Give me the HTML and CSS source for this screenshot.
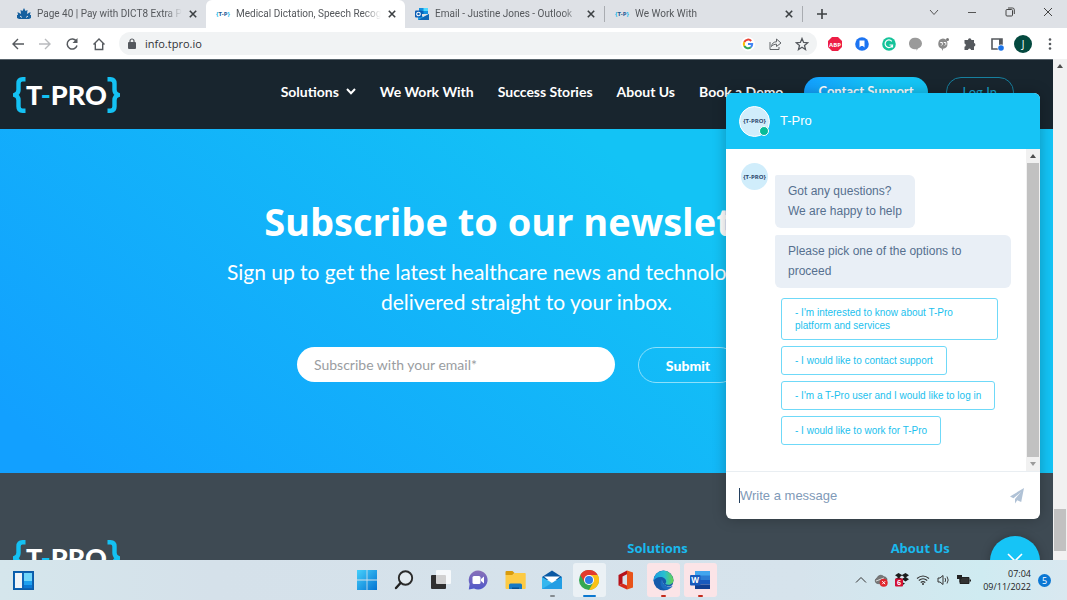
FILE: index.html
```html
<!DOCTYPE html>
<html lang="en">
<head>
<meta charset="utf-8">
<title>Medical Dictation, Speech Recognition</title>
<link rel="stylesheet" href="styles.css">
</head>
<body>
<svg class="defs" aria-hidden="true">
  <symbol id="x" viewBox="0 0 10 10"><path d="M1.800 1.800l6.400 6.400M8.200 1.800L1.800 8.200" stroke="#3c4043" stroke-width="1.600"/></symbol>
  <symbol id="brace" viewBox="0 0 13 36"><path d="M12.500 2.200H9.500Q5.500 2.200 5.500 6.500V13Q5.500 16.800 1.500 18Q5.500 19.200 5.500 23V29.500Q5.500 33.800 9.500 33.800H12.500" fill="none" stroke="#14c1f3" stroke-width="4.400"/></symbol>
</svg>

<header class="tabs">
  <div class="tab">
    <svg class="fav" viewBox="0 0 14 14"><path d="M7 1l1.500 3 2-1-.5 4 3.500-2-.5 3h1v3l-2 1H2l-2-1V8h1l-.5-3L4 7l-.5-4 2 1z" fill="#15609f"/><path d="M3 9l2 1.500M11 9l-2 1.500" stroke="#dee1e6"/></svg>
    <span class="tab-title">Page 40 | Pay with DICT8 Extra Plus</span>
    <button aria-label="Close tab"><svg width="10" height="10"><use href="#x"/></svg></button>
  </div>
  <div class="tab active">
    <span class="fav tp"><i>{</i>T-P<i>}</i></span>
    <span class="tab-title">Medical Dictation, Speech Recognition</span>
    <button aria-label="Close tab"><svg width="10" height="10"><use href="#x"/></svg></button>
  </div>
  <div class="tab">
    <svg class="fav" viewBox="0 0 14 14"><path d="M4 1h9v6H4z" fill="#1490df"/><path d="M8.500 1H13v3H8.500z" fill="#50d9ff"/><path d="M4 4h4.500v3H4z" fill="#0364b8"/><path d="M3 7l5.500 3L14 7v6H3z" fill="#28a8ea"/><path d="M3 13l11-6v6z" fill="#1066b5"/><rect y="3.500" width="7" height="7" rx="1" fill="#0a5db5"/><circle cx="3.500" cy="7" r="1.800" fill="none" stroke="#fff" stroke-width="1.100"/></svg>
    <span class="tab-title">Email - Justine Jones - Outlook</span>
    <button aria-label="Close tab"><svg width="10" height="10"><use href="#x"/></svg></button>
  </div>
  <div class="tab divided">
    <span class="fav tp"><i>{</i>T-P<i>}</i></span>
    <span class="tab-title">We Work With</span>
    <button aria-label="Close tab"><svg width="10" height="10"><use href="#x"/></svg></button>
  </div>
  <button class="new-tab" aria-label="New tab"><svg width="12" height="12" viewBox="0 0 12 12"><path d="M6 1v10M1 6h10" stroke="#3c4043" stroke-width="1.600"/></svg></button>
  <div class="window">
    <button aria-label="Search tabs"><svg width="10" height="10" viewBox="0 0 10 10"><path d="M1 3l4 4.500L9 3" fill="none" stroke="#555" stroke-width="1"/></svg></button>
    <button aria-label="Minimise"><svg width="10" height="10" viewBox="0 0 10 10"><path d="M1 5.500h8" stroke="#555"/></svg></button>
    <button aria-label="Restore"><svg width="10" height="10" viewBox="0 0 10 10"><rect x="1" y="2.500" width="6.500" height="6.500" rx="1" fill="none" stroke="#444"/><path d="M3 1h4.500q1.800 0 1.800 1.800V7" fill="none" stroke="#444"/></svg></button>
    <button aria-label="Close"><svg width="10" height="10" viewBox="0 0 10 10"><path d="M1 1l8 8M9 1L1 9" stroke="#444"/></svg></button>
  </div>
</header>

<div class="toolbar">
  <nav class="history">
    <button aria-label="Back"><svg width="14" height="14" viewBox="0 0 14 14"><path d="M13 7H2M7 2L2 7l5 5" fill="none" stroke="#55595e" stroke-width="1.400"/></svg></button>
    <button aria-label="Forward"><svg width="14" height="14" viewBox="0 0 14 14"><path d="M1 7h11M7 2l5 5-5 5" fill="none" stroke="#b9bbbe" stroke-width="1.400"/></svg></button>
    <button aria-label="Reload"><svg width="14" height="14" viewBox="0 0 14 14"><path d="M11.500 4.500A5 5 0 1 0 12 8.500" fill="none" stroke="#55595e" stroke-width="1.500"/><path d="M12.500 1v5H7.500z" fill="#55595e"/></svg></button>
    <button aria-label="Home"><svg width="14" height="14" viewBox="0 0 14 14"><path d="M1.500 7.500L7 2l5.500 5.500M3.300 6.500v6h7.400v-6" fill="none" stroke="#55595e" stroke-width="1.400"/></svg></button>
  </nav>
  <div class="omnibox">
    <label class="location">
      <svg width="8" height="11" viewBox="0 0 8 11"><rect y="4" width="8" height="7" rx="1" fill="#55595e"/><path d="M2 5V3a2 2 0 0 1 4 0v2" fill="none" stroke="#55595e" stroke-width="1.200"/></svg>
      <input class="url" aria-label="Address" value="info.tpro.io">
    </label>
    <button aria-label="Google"><svg width="14" height="14" viewBox="0 0 14 14"><circle cx="7" cy="7" r="7" fill="#fff"/><g fill="none" stroke-width="2"><path d="M10.200 4A4.200 4.200 0 0 0 3.300 5" stroke="#ea4335"/><path d="M3.300 5a4.200 4.200 0 0 0 0 4" stroke="#fbbc05"/><path d="M3.300 9a4.200 4.200 0 0 0 6.500 1.200" stroke="#34a853"/><path d="M9.800 10.200A4 4 0 0 0 11.200 7H7" stroke="#4285f4"/></g></svg></button>
    <button aria-label="Share"><svg width="14" height="14" viewBox="0 0 14 14"><path d="M2 5v7.500h9V10M3.500 9.500C4 6 6 4.800 8.500 4.800V2L13 6 8.500 9.500V7.200C6.500 7.200 5 7.700 3.500 9.500z" fill="none" stroke="#606468"/></svg></button>
    <button aria-label="Bookmark"><svg width="14" height="14" viewBox="0 0 14 14"><path d="M7 1.500l1.600 3.900 4.100.3-3.200 2.700 1 4.100L7 10.300l-3.500 2.200 1-4.100-3.200-2.700 4.100-.3z" fill="none" stroke="#55595e" stroke-width="1.300"/></svg></button>
  </div>
  <div class="extensions">
    <button aria-label="Adblock Plus"><svg width="14" height="14" viewBox="0 0 14 14"><path d="M4 0h6l4 4v6l-4 4H4l-4-4V4z" fill="#ed1e45"/><text x="7" y="9.500" class="abp">ABP</text></svg></button>
    <button aria-label="Reader"><svg width="14" height="14" viewBox="0 0 14 14"><circle cx="7" cy="7" r="6.800" fill="#1c74f2"/><path d="M4.500 3.500h5v7L7.900 9H6l-1.500 1.500z" fill="#fff"/></svg></button>
    <button aria-label="Grammarly"><svg width="14" height="14" viewBox="0 0 14 14"><circle cx="7" cy="7" r="6.800" fill="#15c39a"/><path d="M9.800 4.300A3.800 3.800 0 1 0 10.500 8H7.500M10.500 8v2.500" fill="none" stroke="#fff" stroke-width="1.200"/></svg></button>
    <button aria-label="Comments"><svg width="14" height="14" viewBox="0 0 14 14"><path d="M7 .8a6 6 0 0 1 6 5.500c0 3-2 4.700-4 5.200L7.500 13.800V12A5.800 5.800 0 1 1 7 .8z" fill="#9a9a9a"/></svg></button>
    <button aria-label="Hangouts"><svg width="14" height="14" viewBox="0 0 14 14"><path d="M7 1.500a5.200 5.200 0 0 1 0 10.300V14L5.500 11.500A5.200 5.200 0 0 1 7 1.500z" fill="#8a8a8a"/><path d="M4.300 5.500h2v2l-1 1M7.800 5.500h2v2l-1 1" fill="none" stroke="#fff"/><circle cx="11.500" cy="2.500" r="1.500" fill="#777"/></svg></button>
    <button aria-label="Extensions"><svg width="14" height="14" viewBox="0 0 14 14"><path d="M5 3a1.700 1.700 0 0 1 3.400 0H11v3a1.800 1.800 0 0 1 0 3.500V13H8a1.500 1.500 0 0 0-3 0H1.500V9.800a1.700 1.700 0 0 0 0-3.300V3z" fill="#55595e"/></svg></button>
    <button aria-label="Side panel"><svg width="14" height="14" viewBox="0 0 14 14"><path d="M2 2h10v10H2z" fill="none" stroke="#55595e" stroke-width="1.600"/><path d="M9 2h3v10H9z" fill="#55595e"/><circle cx="11" cy="11" r="3.500" fill="#fff"/><circle cx="11" cy="11" r="2.800" fill="#1a73e8"/></svg></button>
    <button class="profile" aria-label="Profile">J</button>
    <button aria-label="Menu"><svg width="14" height="14" viewBox="0 0 14 14"><g fill="#55595e"><circle cx="7" cy="2.500" r="1.300"/><circle cx="7" cy="7" r="1.300"/><circle cx="7" cy="11.500" r="1.300"/></g></svg></button>
  </div>
</div>

<div class="browser-page">
  <main class="site">
    <div class="site-nav">
      <a class="logo" href="#" aria-label="T-PRO"><svg width="13" height="36"><use href="#brace"/></svg><span>T<b>-</b>PRO</span><svg class="flip" width="13" height="36"><use href="#brace"/></svg></a>
      <nav class="links">
        <a href="#">Solutions <svg width="10" height="7" viewBox="0 0 10 7"><path d="M1 1l4 4.200L9 1" fill="none" stroke="#fff" stroke-width="2"/></svg></a>
        <a href="#">We Work With</a>
        <a href="#">Success Stories</a>
        <a href="#">About Us</a>
        <a href="#">Book a Demo</a>
      </nav>
      <a class="pill contact" href="#">Contact Support</a>
      <a class="pill login" href="#">Log In</a>
    </div>
    <section class="hero">
      <h1>Subscribe to our newsletter</h1>
      <p>Sign up to get the latest healthcare news and technology updates<br>delivered straight to your inbox.</p>
      <form class="signup">
        <input type="email" aria-label="Email" placeholder="Subscribe with your email*">
        <button type="button">Submit</button>
      </form>
    </section>
    <footer class="site-footer">
      <a class="logo" href="#" aria-label="T-PRO"><svg width="13" height="36"><use href="#brace"/></svg><span>T<b>-</b>PRO</span><svg class="flip" width="13" height="36"><use href="#brace"/></svg></a>
      <h2>Solutions</h2>
      <h2>About Us</h2>
    </footer>

    <aside class="chat">
      <header class="chat-head">
        <span class="avatar online">{T-PRO}</span>
        <span>T-Pro</span>
      </header>
      <div class="chat-main">
        <div class="thread">
          <span class="avatar small">{T-PRO}</span>
          <div class="messages">
            <p>Got any questions?<br>We are happy to help</p>
            <p>Please pick one of the options to proceed</p>
            <div class="options">
              <button>- I'm interested to know about T-Pro platform and services</button>
              <button>- I would like to contact support</button>
              <button>- I'm a T-Pro user and I would like to log in</button>
              <button>- I would like to work for T-Pro</button>
            </div>
          </div>
        </div>
        <div class="scroll inner"><i class="up"></i><i class="thumb"></i><i class="down"></i></div>
      </div>
      <div class="composer">
        <i class="caret"></i>
        <input aria-label="Message" placeholder="Write a message">
        <button aria-label="Send"><svg width="14" height="16" viewBox="0 0 14 16"><path d="M14 0L0 8.500l3.500 1.700L11 4l-6 7v4.500l2.200-3.200 4 1.700z" fill="#b0c2d6"/></svg></button>
      </div>
    </aside>
    <button class="fab" aria-label="Close chat"><svg width="18" height="18" viewBox="0 0 18 18"><path d="M2 2l14 14M16 2L2 16" stroke="#fff" stroke-width="1.600"/></svg></button>
  </main>
  <div class="scroll outer"><i class="up"></i><i class="thumb"></i></div>
</div>

<footer class="taskbar">
  <button class="widgets" aria-label="Widgets"><svg width="21" height="19" viewBox="0 0 21 19"><rect x=".7" y=".7" width="19.600" height="17.600" fill="#0f66b8" stroke="#0a5ba8" stroke-width="1.400"/><path d="M2 2h7v15H2z" fill="#f1f4f8"/><path d="M11 2h8v8h-8z" fill="#6fd5fb"/><path d="M11 10h8v4h-8z" fill="#1ea0ef"/><path d="M11 14h8v3h-8z" fill="#0a78d4"/></svg></button>
  <div class="apps">
    <button aria-label="Start"><svg width="20" height="20" viewBox="0 0 20 20"><defs><linearGradient id="win" x2="1" y2="1"><stop stop-color="#46d0fb"/><stop offset="1" stop-color="#0373d2"/></linearGradient></defs><path d="M0 0h9.600v9.600H0zM10.400 0H20v9.600h-9.600zM0 10.400h9.600V20H0zM10.400 10.400H20V20h-9.600z" fill="url(#win)"/></svg></button>
    <button aria-label="Search"><svg width="20" height="20" viewBox="0 0 20 20"><circle cx="11.500" cy="8" r="6.700" fill="#e3ebf0" stroke="#2b2b2b" stroke-width="1.900"/><path d="M6.500 13L2 18" stroke="#222" stroke-width="2.400" stroke-linecap="round"/></svg></button>
    <button aria-label="Task view"><svg width="20" height="20" viewBox="0 0 20 20"><rect y="5" width="15" height="14" rx="1" fill="#303030"/><rect x="5" width="15" height="14" rx="1" fill="#fff" opacity=".78"/></svg></button>
    <button aria-label="Chat"><svg width="20" height="20" viewBox="0 0 20 20"><defs><linearGradient id="cht" x2="0" y2="1"><stop stop-color="#8a70b8"/><stop offset="1" stop-color="#5059c9"/></linearGradient></defs><path d="M10 .5a9.500 9.500 0 1 1-4 18.100L.8 19.500 1.600 14A9.500 9.500 0 0 1 10 .5z" fill="url(#cht)"/><rect x="4.500" y="6" width="8" height="8" rx="1.500" fill="#fff"/><path d="M13 9l3-2.500v7L13 11z" fill="#fff"/></svg></button>
    <button aria-label="Files"><svg width="21" height="20" viewBox="0 0 21 20"><path d="M.5 2q0-1 1-1h6l2 2-2 2h-7z" fill="#d99b0c"/><path d="M.5 5h7l2-2H20q.7 0 .7.700V18q0 1-1 1H1.500q-1 0-1-1z" fill="#fdcb45"/><path d="M4 19v-4q0-1.500 1.500-1.500h10q1.500 0 1.500 1.500v4z" fill="#1679c4"/><path d="M7 19v-1.500h7V19z" fill="#075091"/></svg></button>
    <button class="running" aria-label="Mail"><svg width="20" height="20" viewBox="0 0 20 20"><path d="M0 7l10-6.500L20 7v3H0z" fill="#0a58a3"/><path d="M2 6.500h16L10 13z" fill="#fff"/><path d="M0 7l10 6 10-6v12H0z" fill="#36b7ee"/><path d="M0 19l20-12v12z" fill="#1a91de" opacity=".65"/></svg></button>
    <button class="current" aria-label="Chrome"><svg width="20" height="20" viewBox="0 0 20 20"><circle cx="10" cy="10" r="10" fill="#34a853"/><path d="M1.300 5A10 10 0 0 1 18.700 5H10L5.700 12.500z" fill="#e33b2e"/><path d="M18.700 5A10 10 0 0 1 10 20l4.300-7.500L10 5z" fill="#fbc116"/><circle cx="10" cy="10" r="5" fill="#fff"/><circle cx="10" cy="10" r="4" fill="#2f7de9"/></svg></button>
    <button aria-label="Office"><svg width="20" height="20" viewBox="0 0 20 20"><path d="M11 .5l6 2v15l-6 2z" fill="#e8531a"/><path d="M2.500 5L11 .5v3.800L6.500 6.500v7l-4 2z" fill="#b5121b"/><path d="M2.500 15.500l4-2 4.500 2v4z" fill="#d42a1c"/></svg></button>
    <button class="alert" aria-label="Edge"><svg width="21" height="21" viewBox="0 0 21 21"><defs><linearGradient id="edg" x2="1"><stop stop-color="#1c9de0"/><stop offset=".55" stop-color="#29bfd0"/><stop offset="1" stop-color="#68d34e"/></linearGradient></defs><circle cx="10.500" cy="10.500" r="10" fill="#155aab"/><path d="M10.500 9.500c-1.500 2-.5 6.500 4.500 6.800 2.500.1 4-.7 6-2.300l-1 5h-3.500C11 17.500 8 13 10.500 9.500z" fill="#fbe4e7"/><path d="M9 9c-3 4-1 10.500 5 10.700 2.500-.4 4.500-2 5.700-4C15 18 9 15.500 9 9z" fill="#1a6cc0"/><path d="M.5 11.500A10 10 0 0 1 20.500 10c0 4.500-5 5.700-8 4-.6-.4.700-1 .7-2.800C13 9 10.500 7 7.500 7 4 7 1.500 8.500.5 11.500z" fill="url(#edg)"/></svg></button>
    <button class="alert" aria-label="Word"><svg width="20" height="20" viewBox="0 0 20 20"><path d="M5 1h15v5H5z" fill="#41a5ee"/><path d="M5 5.500h15V10H5z" fill="#2b7cd3"/><path d="M5 10h15v4.500H5z" fill="#185abd"/><path d="M5 14.500h15V19H5z" fill="#103f91"/><rect y="5" width="10.500" height="10.500" rx="1" fill="#185abd"/><text x="5.200" y="13" class="word">W</text></svg></button>
  </div>
  <div class="tray">
    <svg width="12" height="12" viewBox="0 0 12 12"><path d="M1 8.500l5-5 5 5" fill="none" stroke="#333"/></svg>
    <svg width="14" height="14" viewBox="0 0 14 14"><path d="M3 10.500a3 3 0 0 1 0-5.500A4 4 0 0 1 10 3.800a3 3 0 0 1 3 3.500L8 11z" fill="#777" stroke="#555" stroke-width=".6"/><path d="M2 8l8-3" stroke="#ddd"/><circle cx="9.700" cy="9.700" r="4" fill="#e0252c"/><path d="M8.200 8.200l3 3M11.200 8.200l-3 3" stroke="#fff"/></svg>
    <svg width="14" height="14" viewBox="0 0 14 14"><path d="M3.500 0L7 2l3.500-2L14 2.200l-3 2 3 2L10.500 8.500 7 6.300 3.500 8.500 0 6.200l3-2-3-2zM7 9l3 1.500-3 2z" fill="#1c1c1c"/><path d="M7 2.500l2.500 1.700L7 5.900 4.500 4.200z" fill="#dbe8f0"/><rect y="5.500" width="8" height="8" rx="1" fill="#d20f34"/><text x="4" y="12" class="six">6</text></svg>
    <svg width="14" height="14" viewBox="0 0 14 14"><g fill="none" stroke="#333" stroke-width="1.100"><path d="M1 5.500q6-5 12 0M2.800 7.500q4.200-3.500 8.400 0M4.700 9.500q2.300-1.800 4.600 0"/></g><circle cx="7" cy="11" r="1" fill="#333"/></svg>
    <svg width="13" height="14" viewBox="0 0 13 14"><path d="M1 5h2l3-2.500v9L3 9H1z" fill="none" stroke="#333"/><path d="M8 5q1.300 2 0 4M10 3.500q2.400 3.500 0 7" fill="none" stroke="#444"/></svg>
    <svg width="14" height="14" viewBox="0 0 14 14"><path d="M3 4.500h9v6H3z" fill="#333" stroke="#222"/><path d="M12.500 6.500H14v2h-1.500z" fill="#222"/><path d="M0 2h5v4H3.500v3h-1V6H0z" fill="#222"/></svg>
    <time>07:04<br>09/11/2022</time>
    <span class="count">5</span>
  </div>
</footer>
</body>
</html>
```
FILE: styles.css
```css
* { box-sizing: border-box; }
body { margin: 0; height: 100vh; display: flex; flex-direction: column; overflow: hidden; font-family: "Open Sans", sans-serif; background: #fff; }
button { border: 0; padding: 0; background: none; font: inherit; color: inherit; }
input { border: 0; padding: 0; background: none; font: inherit; outline: 0; min-width: 0; }
a { color: inherit; text-decoration: none; }
svg { display: block; flex: none; }
.defs { position: absolute; width: 0; height: 0; }

/* Tab strip */
.tabs { display: flex; flex: none; height: 28px; background: #dee1e6; font: 10px/16px Roboto, sans-serif; color: #55585c; }
.tab { flex: 0 1 199px; min-width: 0; display: flex; align-items: center; gap: 6px; padding: 0 8px 0 10px; }
.tab:first-child { flex-basis: 206px; padding-left: 17px; }
.tab.active { background: #fff; border-radius: 6px 6px 0 0; }
.tab.divided { border-left: 1px solid #a9acb1; border-right: 1px solid #a9acb1; height: 16px; align-self: center; }
.fav { flex: none; width: 14px; height: 14px; }
.tp { font: 700 6px/14px "Open Sans", sans-serif; color: #23558f; white-space: nowrap; }
.tp i { color: #14b9ec; font-style: normal; }
.tab-title { flex: 1; white-space: nowrap; overflow: hidden; mask-image: linear-gradient(90deg, #000 88%, transparent); }
.new-tab { margin-left: 13px; }
.window { margin-left: auto; display: flex; padding: 0 0 4px; }
.window button { width: 38px; display: grid; place-items: center; }

/* Toolbar */
.toolbar { display: flex; flex: none; align-items: center; height: 31px; background: #fff; padding: 0 4px; }
.history { display: flex; margin-right: 7px; }
.history button, .extensions button { width: 27px; display: grid; place-items: center; }
.omnibox { flex: 1; display: flex; align-items: center; height: 23px; border-radius: 12px; background: #f1f3f4; padding: 0 8px 0 9px; gap: 13px; }
.location { flex: 1; display: flex; align-items: center; gap: 9px; }
.url { flex: 1; font-size: 11px; color: #303236; }
.extensions { display: flex; align-items: center; padding-left: 4px; }
.extensions .profile { width: 18px; height: 18px; margin: 0 4px; border-radius: 50%; background: #04493f; color: #fff; font-size: 10px; }
.abp { font: 700 6px "Open Sans", sans-serif; fill: #fff; text-anchor: middle; }

/* Page frame */
.browser-page { flex: 1; min-height: 0; display: flex; }
.site { position: relative; flex: 1; min-width: 0; display: flex; flex-direction: column; overflow: hidden; background: #3e4a53; color: #fff; font-family: Lato, sans-serif; }
.scroll { display: flex; flex-direction: column; align-items: center; flex: none; width: 14px; background: #f1f1f1; }
.up { margin: 5px 0; border: 3px solid transparent; border-top: 0; border-bottom: 4px solid #4d4d4d; }
.down { margin: 5px 0; border: 3px solid transparent; border-bottom: 0; border-top: 4px solid #9b9b9b; }
.thumb { width: 12px; background: #c1c1c1; }
.outer .thumb { height: 42px; margin: auto 0 9px; }
.inner { width: 14px; }
.inner .thumb { flex: 1; }

/* Site header */
.site-nav { display: flex; flex: none; align-items: center; height: 70px; padding: 0 39px 6px 13px; border-top: 1px solid #59646c; background: #18252e; font-size: 14px; font-weight: 700; white-space: nowrap; }
.logo { display: flex; align-items: center; font: 900 27px/36px Lato, sans-serif; }
.site-nav .logo { padding-top: 6px; }
.logo b { color: #14c1f3; }
.flip { transform: scaleX(-1); }
.links { display: flex; gap: 24px; margin: 0 21px 0 auto; }
.links a { display: flex; align-items: center; gap: 7px; }
.pill { height: 30px; line-height: 28px; border-radius: 15px; font-size: 13px; }
.contact { padding: 0 14px; margin-right: 18px; background: linear-gradient(90deg, #129fff, #15c4f5 60%); }
.login { padding: 0 16px; border: 1px solid #16809f; color: #16a6cf; font-weight: 400; }

/* Newsletter */
.hero { display: flex; flex-direction: column; align-items: center; flex: none; height: 344px; padding-top: 63px; background: linear-gradient(40deg, #12a0ff 5%, #13c3f5 68%); text-align: center; white-space: nowrap; }
h1 { margin: 0; font: 700 38px/58px "Open Sans", sans-serif; }
.hero p { margin: 7px 0 30px; font-size: 21px; line-height: 30px; }
.signup { display: flex; gap: 23px; padding-right: 18px; }
.signup input { width: 318px; height: 35px; padding: 0 17px; border-radius: 18px; background: #fff; font-size: 14px; }
.signup input::placeholder { color: #9a9da1; }
.signup button { width: 100px; height: 36px; border: 1px solid #8de0fb; border-radius: 18px; font-size: 14px; font-weight: 900; }

/* Site footer */
.site-footer { display: grid; grid-template-columns: 7fr 3fr 1.85fr; flex: 1; align-items: start; padding: 67px 0 0 13px; }
.site-footer h2 { margin: 0; font: 700 13px/16px "Open Sans", sans-serif; color: #19b9ee; }

/* Chat widget */
.chat { position: absolute; top: 34px; right: 13px; width: 314px; height: 426px; display: flex; flex-direction: column; border-radius: 6px; overflow: hidden; background: #fff; color: #56708f; font: 12px/20px "Liberation Sans", Arial, sans-serif; box-shadow: 0 0 14px rgba(0, 0, 0, .25); }
.chat-head { display: flex; flex: none; align-items: center; gap: 10px; height: 56px; padding: 0 13px; background: #16c4f6; color: #fff; font-size: 13px; }
.avatar { position: relative; display: grid; place-items: center; flex: none; width: 31px; height: 31px; border: 1px solid #fff; border-radius: 50%; background: #d0edfb; color: #2a456a; font: 700 6px/10px "Open Sans", sans-serif; }
.avatar.online::after { content: ""; position: absolute; right: 0; bottom: 0; width: 8px; height: 8px; border: 1px solid #fff; border-radius: 50%; background: #07bc98; }
.avatar.small { width: 27px; height: 27px; border: 0; }
.chat-main { flex: 1; min-height: 0; display: flex; }
.thread { flex: 1; display: flex; gap: 7px; padding: 14px 15px 0; }
.messages { flex: 1; padding-top: 12px; }
.messages p { width: fit-content; margin: 0 0 7px; padding: 6px 13px 7px; border-radius: 2px 6px 6px 6px; background: #e9eff6; }
.options { display: flex; flex-direction: column; align-items: flex-start; gap: 6px; padding: 3px 13px 0 6px; }
.options button { padding: 7px 13px; border: 1px solid #6fd9f8; border-radius: 3px; color: #1bbfee; font-size: 10px; line-height: 13px; text-align: left; }
.composer { display: flex; align-items: center; flex: none; height: 48px; padding: 0 16px 0 13px; border-top: 1px solid #e9eef2; }
.composer input { flex: 1; font-size: 13px; }
.composer input::placeholder { color: #7f9ab8; }
.caret { width: 1px; height: 15px; background: #24405f; }
.fab { position: absolute; right: 13px; bottom: -26px; width: 50px; height: 50px; display: grid; place-items: center; border-radius: 50%; background: #16c4f6; box-shadow: 0 0 10px rgba(0, 0, 0, .25); }

/* Taskbar */
.taskbar { display: grid; grid-template-columns: 1fr auto 1fr; flex: none; align-items: center; height: 40px; background: linear-gradient(90deg, #d5e6ec, #d5e1ea 20%, #d6e3ec 75%, #cfebf1 92%, #d9e8f0); padding: 0 13px; }
.widgets { justify-self: start; }
.apps { display: flex; gap: 4px; }
.apps button { position: relative; display: grid; place-items: center; width: 33px; height: 34px; border-radius: 3px; }
.apps .current { background: #ebf1f5; }
.apps .alert { background: #fbe4e7; }
.apps .running::after, .apps .current::after, .apps .alert::after { content: ""; position: absolute; bottom: 0; left: 14px; width: 5px; height: 2px; border-radius: 1px; background: #858b90; }
.apps .current::after { left: 10px; width: 13px; background: #0b78d0; }
.apps .alert::after { background: #c42b1c; }
.word { font: 700 8px "Open Sans", sans-serif; fill: #fff; text-anchor: middle; }
.six { font: 700 7px "Open Sans", sans-serif; fill: #fff; text-anchor: middle; }
.tray { justify-self: end; display: flex; align-items: center; gap: 7px; padding-right: 3px; color: #222; }
.tray time { margin-left: 5px; font-size: 9px; line-height: 13px; text-align: right; }
.count { width: 13px; height: 13px; border-radius: 50%; background: #0b78d4; color: #fff; font-size: 9px; line-height: 13px; text-align: center; }
```
